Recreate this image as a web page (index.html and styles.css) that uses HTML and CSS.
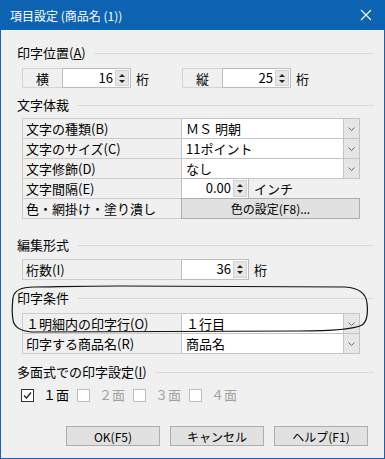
FILE: index.html
```html
<!DOCTYPE html>
<html lang="ja">
  <head>
    <meta charset="UTF-8" />
    <title>項目設定</title>
    <link rel="stylesheet" href="styles.css">
  </head>
  <body>
    <div class="window">
      <div class="titlebar">
        <span class="title">項目設定 (商品名 (1))</span>
        <svg class="close" width="12" height="12" viewBox="0 0 12 12">
          <path d="M1 1 L11 11 M11 1 L1 11" stroke="#fff" stroke-width="1.1" fill="none" />
        </svg>
      </div>

      <div class="content">
        <!-- 印字位置 -->
        <div class="group-head g1"><span>印字位置(<u>A</u>)</span></div>
        <div class="pos-row">
          <span class="tag">横</span>
          <span class="spin"><span class="val">16</span><span class="spin-btn"></span></span>
          <span class="unit">桁</span>
          <span class="tag tag-gap">縦</span>
          <span class="spin"><span class="val">25</span><span class="spin-btn"></span></span>
          <span class="unit">桁</span>
        </div>

        <!-- 文字体裁 -->
        <div class="group-head g2"><span>文字体裁</span></div>
        <div class="table t1">
          <div class="row">
            <span class="label">文字の種類(B)</span>
            <span class="drop"><span class="drop-val">ＭＳ 明朝</span><span class="drop-btn"><svg width="7" height="4" viewBox="0 0 7 4"><path d="M0.5 0.5 L3.5 3.5 L6.5 0.5" stroke="#666" fill="none" /></svg></span></span>
          </div>
          <div class="row">
            <span class="label">文字のサイズ(C)</span>
            <span class="drop"><span class="drop-val">11ポイント</span><span class="drop-btn"><svg width="7" height="4" viewBox="0 0 7 4"><path d="M0.5 0.5 L3.5 3.5 L6.5 0.5" stroke="#666" fill="none" /></svg></span></span>
          </div>
          <div class="row">
            <span class="label">文字修飾(D)</span>
            <span class="drop"><span class="drop-val">なし</span><span class="drop-btn"><svg width="7" height="4" viewBox="0 0 7 4"><path d="M0.5 0.5 L3.5 3.5 L6.5 0.5" stroke="#666" fill="none" /></svg></span></span>
          </div>
          <div class="row">
            <span class="label">文字間隔(E)</span>
            <span class="spin short"><span class="val">0.00</span><span class="spin-btn"></span></span>
            <span class="unit">インチ</span>
          </div>
          <div class="row">
            <span class="label">色・網掛け・塗り潰し</span>
            <button class="btn wide">色の設定(F8)...</button>
          </div>
        </div>

        <!-- 編集形式 -->
        <div class="group-head g3"><span>編集形式</span></div>
        <div class="table t2">
          <div class="row">
            <span class="label">桁数(I)</span>
            <span class="spin short"><span class="val">36</span><span class="spin-btn"></span></span>
            <span class="unit">桁</span>
          </div>
        </div>

        <!-- 印字条件 -->
        <div class="group-head g4"><span>印字条件</span></div>
        <div class="table t3">
          <div class="row">
            <span class="label">１明細内の印字行(O)</span>
            <span class="drop"><span class="drop-val">１行目</span><span class="drop-btn"><svg width="7" height="4" viewBox="0 0 7 4"><path d="M0.5 0.5 L3.5 3.5 L6.5 0.5" stroke="#666" fill="none" /></svg></span></span>
          </div>
          <div class="row">
            <span class="label">印字する商品名(R)</span>
            <span class="drop"><span class="drop-val">商品名</span><span class="drop-btn"><svg width="7" height="4" viewBox="0 0 7 4"><path d="M0.5 0.5 L3.5 3.5 L6.5 0.5" stroke="#666" fill="none" /></svg></span></span>
          </div>
        </div>

        <!-- 多面式 -->
        <div class="group-head g5"><span>多面式での印字設定(<u>I</u>)</span></div>
        <div class="checks">
          <label class="check">
            <span class="box on"><svg width="11" height="11" viewBox="0 0 11 11"><path d="M2 5.5 L4.5 8 L9 2.5" stroke="#222" stroke-width="1.3" fill="none" /></svg></span>
            <span>１面</span>
          </label>
          <label class="check off"><span class="box"></span><span>２面</span></label>
          <label class="check off"><span class="box"></span><span>３面</span></label>
          <label class="check off"><span class="box"></span><span>４面</span></label>
        </div>

        <div class="buttons">
          <button class="btn">OK(F5)</button>
          <button class="btn">キャンセル</button>
          <button class="btn">ヘルプ(F1)</button>
        </div>
      </div>
    </div>

    <!-- 手書きの丸囲み -->
    <svg class="mark" width="385" height="459" viewBox="0 0 385 459">
      <path d="M34 287 C22 287 14 290 13 298 C12 306 12 314 13 320 C14 327 20 331 32 332 L300 331 C330 331 352 330 362 325 C368 321 368 312 367 303 C366 294 360 288 345 287 L120 286 C80 286 50 287 34 287 Z" stroke="#111" stroke-width="1.2" fill="none" />
    </svg>
  </body>
</html>
```

FILE: styles.css
```css
body {
  margin: 0;
  position: relative;
  font-family: "Noto Sans CJK JP", sans-serif;
  font-size: 13px;
  color: #000;
}

.window {
  width: 385px;
  height: 459px;
  box-sizing: border-box;
  background-color: #f0f0f0;
  border: 1px solid #1762ae;
  border-top: none;
}

.titlebar {
  height: 30px;
  margin: 0 -1px;
  background-color: #0b63b1;
  display: flex;
  align-items: center;
  justify-content: space-between;
  padding: 0 10px 0 10px;
  color: white;
  font-size: 12px;
}

.close {
  margin-right: 3px;
}

.content {
  padding: 0 10px 0 16px;
}

.group-head {
  display: flex;
  align-items: center;
  height: 16px;
  line-height: 16px;
  gap: 8px;
}

.group-head::after {
  content: "";
  flex: 1;
  border-top: 1px solid #d9d9d9;
}

.group-head u {
  text-decoration-thickness: 1px;
}

.g1 { margin-top: 15px; }
.g2 { margin-top: 9px; }
.g3 { margin-top: 18px; }
.g4 { margin-top: 10px; }
.g5 { margin-top: 10px; }

.pos-row {
  display: flex;
  align-items: center;
  height: 20px;
  margin-top: 7px;
  margin-left: 5px;
}

.tag {
  width: 41px;
  height: 20px;
  box-sizing: border-box;
  border: 1px solid #d4d4d4;
  display: flex;
  align-items: center;
  justify-content: center;
}

.tag-gap {
  margin-left: 33px;
}

.spin {
  width: 69px;
  height: 20px;
  box-sizing: border-box;
  margin-left: -1px;
  border: 1px solid #bcbcbc;
  background-color: white;
  display: flex;
  align-items: stretch;
  padding: 1px;
}

.spin.short {
  width: 68px;
}

.val {
  flex: 1;
  text-align: right;
  padding-right: 2px;
  line-height: 16px;
}

.spin-btn {
  width: 14px;
  background-color: #e6e6e6;
  border: 1px solid #d0d0d0;
  box-sizing: border-box;
  display: flex;
  flex-direction: column;
  align-items: center;
  justify-content: center;
  gap: 3px;
}

.spin-btn::before {
  content: "";
  border-left: 3px solid transparent;
  border-right: 3px solid transparent;
  border-bottom: 3px solid #222;
}

.spin-btn::after {
  content: "";
  border-left: 3px solid transparent;
  border-right: 3px solid transparent;
  border-top: 3px solid #222;
}

.unit {
  margin-left: 5px;
}

.table {
  margin-left: 5px;
}

.t1 { margin-top: 5px; }
.t2 { margin-top: 6px; }
.t3 { margin-top: 7px; }

.row {
  display: flex;
  align-items: center;
  height: 21px;
}

.row + .row {
  margin-top: -1px;
}

.label {
  width: 160px;
  height: 21px;
  box-sizing: border-box;
  border: 1px solid #cdcdcd;
  padding-left: 3px;
  display: flex;
  align-items: center;
}

.drop {
  width: 179px;
  height: 21px;
  box-sizing: border-box;
  margin-left: -1px;
  border: 1px solid #c4c4c4;
  background-color: white;
  display: flex;
  align-items: stretch;
}

.drop-val {
  flex: 1;
  padding-left: 4px;
  display: flex;
  align-items: center;
}

.drop-btn {
  width: 15px;
  background-color: #e6e6e6;
  border-left: 1px solid #c4c4c4;
  display: flex;
  align-items: center;
  justify-content: center;
}

.row .spin {
  height: 21px;
}

.btn {
  font-family: "Noto Sans CJK JP", sans-serif;
  font-size: 12px;
  background-color: #e1e1e1;
  border: 1px solid #adadad;
  padding: 0;
  color: #000;
  height: 20px;
}

.btn.wide {
  width: 179px;
  height: 21px;
  margin-left: -1px;
}

.checks {
  display: flex;
  margin-top: 7px;
  margin-left: 4px;
  height: 16px;
}

.check {
  width: 56px;
  display: flex;
  align-items: center;
  gap: 9px;
  line-height: 16px;
}

.box {
  width: 13px;
  height: 13px;
  box-sizing: border-box;
  border: 1px solid #bcbcbc;
  background-color: white;
  display: flex;
  align-items: center;
  justify-content: center;
}

.box.on {
  border-color: #333;
}

.check.off {
  color: #a0a0a0;
}

.buttons {
  display: flex;
  justify-content: flex-end;
  gap: 10px;
  margin-top: 23px;
  padding-right: 6px;
}

.buttons .btn {
  width: 94px;
}

.mark {
  position: absolute;
  left: 0;
  top: 0;
  pointer-events: none;
}
```
